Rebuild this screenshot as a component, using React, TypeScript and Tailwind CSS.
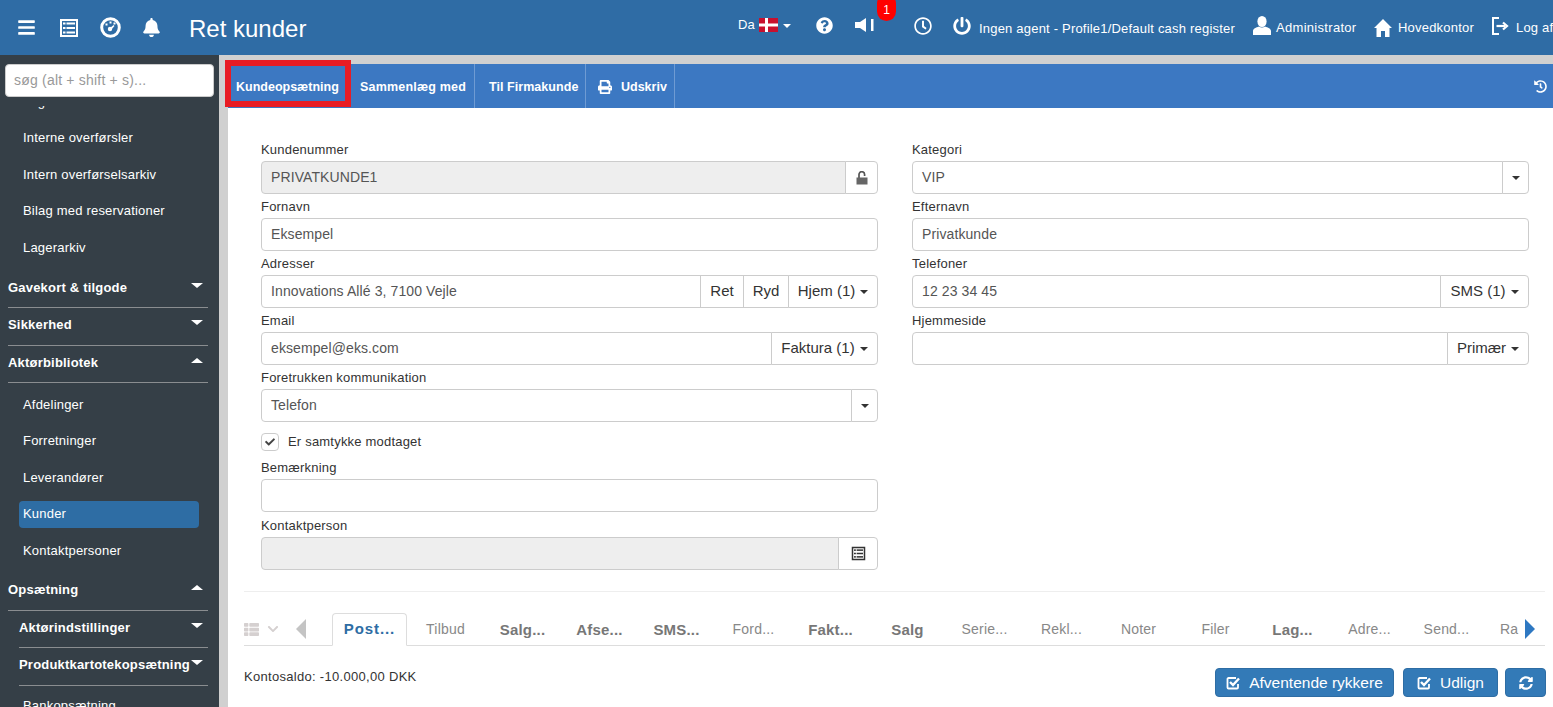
import React from 'react';
import {
  FaBars, FaBell, FaQuestionCircle, FaRegClock, FaPowerOff, FaHistory, FaPrint, FaCheck,
  FaSyncAlt, FaThList, FaChevronDown,
} from 'react-icons/fa';

const ListIcon = ({ size = 20, className = '' }: { size?: number; className?: string }) => (
  <svg width={size} height={size} viewBox="0 0 20 20" fill="currentColor" className={`shrink-0 ${className}`}>
    <path fillRule="evenodd" d="M1 1h18v18H1zM3 3v14h14V3z" />
    <rect x="4" y="4.5" width="2.5" height="2" />
    <rect x="7.5" y="4.5" width="8.5" height="2" />
    <rect x="4" y="9" width="2.5" height="2" />
    <rect x="7.5" y="9" width="8.5" height="2" />
    <rect x="4" y="13.5" width="2.5" height="2" />
    <rect x="7.5" y="13.5" width="8.5" height="2" />
  </svg>
);

const GaugeIcon = () => (
  <svg width="21" height="21" viewBox="0 0 21 21" fill="currentColor" className="ml-[21px] shrink-0">
    <circle cx="10.5" cy="10.5" r="8.8" fill="none" stroke="currentColor" strokeWidth="3" />
    <rect x="9.5" y="4.5" width="2" height="2" />
    <rect x="5.5" y="6.5" width="2" height="2" />
    <rect x="13.5" y="5.5" width="2" height="2" />
    <circle cx="10" cy="12" r="2.2" />
    <path d="M9.5 11.5l4-3.5 1 1-3.5 4z" />
  </svg>
);

const SpeakerIcon = () => (
  <svg width="20" height="14" viewBox="0 0 20 14" fill="currentColor">
    <path d="M0 4h5l6-4v14l-6-4H0z" />
    <rect x="16" y="1" width="2.5" height="12" />
  </svg>
);

const UserIcon = () => (
  <svg width="18" height="19" viewBox="0 0 18 19" fill="currentColor" className="ml-[19px] -mt-[4px] shrink-0">
    <ellipse cx="9" cy="5.5" rx="4.6" ry="5.5" />
    <path d="M6 10.5c-3 1-6 2.2-6 4.5v4h18v-4c0-2.3-3-3.5-6-4.5-1.6 1.4-4.4 1.4-6 0z" />
  </svg>
);

const HomeIcon = () => (
  <svg width="18" height="18" viewBox="0 0 18 18" fill="currentColor" className="ml-[18px] shrink-0">
    <path d="M9 0l9 9h-2.5v9H11v-6H7v6H2.500V9H0z" />
  </svg>
);

const LogoutIcon = () => (
  <svg width="17" height="18" viewBox="0 0 17 18" fill="none" stroke="currentColor" className="ml-[17px] -mt-[3px] shrink-0">
    <path d="M7 1H1v16h6" strokeWidth="2" />
    <path d="M4.500 9H13" strokeWidth="2.200" />
    <path d="M11 5.500L15 9l-4 3.500" strokeWidth="2.200" />
  </svg>
);

const CheckBoxIcon = () => (
  <svg width="14" height="14" viewBox="0 0 14 14" fill="none" stroke="currentColor" className="shrink-0">
    <path d="M12 8v3.500a1 1 0 0 1-1 1H2.500a1 1 0 0 1-1-1V3a1 1 0 0 1 1-1H10" strokeWidth="1.800" />
    <path d="M4 6l3 3 6-6.500" strokeWidth="2.400" />
  </svg>
);

const LockIcon = () => (
  <svg width="12" height="14" viewBox="0 0 12 14" className="shrink-0">
    <path d="M3 7V3.500a2.800 2.800 0 0 1 5.600 0V5" fill="none" stroke="#555" strokeWidth="1.700" />
    <rect x="0.500" y="6.500" width="11" height="7" fill="#666" />
  </svg>
);

const Caret = ({ up = false }: { up?: boolean }) => (
  <span
    className={`inline-block w-0 h-0 border-x-[6px] border-x-transparent ${
      up ? 'border-b-[5px] border-b-white' : 'border-t-[5px] border-t-white'
    }`}
  />
);

const SmallCaret = () => (
  <span className="inline-block w-0 h-0 border-x-[4px] border-x-transparent border-t-[4px] border-t-[#333]" />
);

const NavItem = ({ label, active = false }: { label: string; active?: boolean }) => (
  <div className="h-[36.6px] flex items-center">
    <div className={`ml-[19px] w-[180px] h-[27px] px-[4px] flex items-center rounded-[4px] text-white text-[13px] tracking-[0.2px] ${active ? 'bg-[#2e6da4]' : ''}`}>
      {label}
    </div>
  </div>
);

const NavSection = ({ label, open = false, sub = false }: { label: string; open?: boolean; sub?: boolean }) => (
  <div className={`h-[37.5px] pt-[9px] ${sub ? 'ml-[19px]' : 'ml-[8px]'} mr-[11px] border-b border-[#8a8d90] flex justify-between text-white font-bold text-[13px] leading-4 tracking-[0.2px]`}>
    <span>{label}</span>
    <span className="mr-[5px] mt-[3px] flex"><Caret up={open} /></span>
  </div>
);

const Sidebar = () => (
  <aside className="w-[219px] shrink-0 bg-[#353f47] flex flex-col overflow-hidden">
    <div className="pt-[9px] pl-[5px] pr-[5px] pb-[9px]">
      <div className="h-[33px] bg-white rounded-[4px] border border-[#ccc] px-[8px] flex items-center text-[14px] tracking-[0.2px] text-[#999]">
        søg (alt + shift + s)...
      </div>
    </div>
    <nav className="flex-1 overflow-hidden">
      <div className="-mt-[23px]">
        <NavItem label="Lageroverblik" />
        <NavItem label="Interne overførsler" />
        <NavItem label="Intern overførselsarkiv" />
        <NavItem label="Bilag med reservationer" />
        <NavItem label="Lagerarkiv" />
      </div>
      <div className="mt-[5px]">
        <NavSection label="Gavekort & tilgode" />
        <NavSection label="Sikkerhed" />
        <NavSection label="Aktørbibliotek" open />
      </div>
      <div className="mt-[2.5px]">
        <NavItem label="Afdelinger" />
        <NavItem label="Forretninger" />
        <NavItem label="Leverandører" />
        <NavItem label="Kunder" active />
        <NavItem label="Kontaktpersoner" />
      </div>
      <div className="mt-[4.5px]">
        <NavSection label="Opsætning" open />
        <NavSection label="Aktørindstillinger" sub />
        <NavSection label="Produktkartotekopsætning" sub />
      </div>
      <div className="mt-[2px]">
        <NavItem label="Bankopsætning" />
      </div>
    </nav>
  </aside>
);

const Flag = () => (
  <svg width="19" height="14" viewBox="0 0 19 14">
    <rect width="19" height="14" fill="#c8102e" />
    <rect x="6" width="3" height="14" fill="#fff" />
    <rect y="5.500" width="19" height="3" fill="#fff" />
  </svg>
);

const Header = () => (
  <header className="h-[55px] shrink-0 bg-[#2f6ca5] flex items-center overflow-hidden text-white whitespace-nowrap">
    <FaBars className="ml-[17px] text-[19px] shrink-0" />
    <ListIcon className="ml-[23px]" />
    <GaugeIcon />
    <FaBell className="ml-[21px] text-[19px] shrink-0" />
    <h1 className="ml-[28px] text-[24px] leading-none mt-[2px] font-normal shrink-0 w-[118px]">Ret kunder</h1>
    <span className="ml-[431px] text-[13px] -mt-[6px] w-[21px] shrink-0">Da</span>
    <span className="-mt-[6px] shrink-0"><Flag /></span>
    <span className="ml-[5px] -mt-[4px] flex shrink-0 w-[8px] h-0 border-x-[4px] border-x-transparent border-t-[4px] border-t-white" />
    <FaQuestionCircle className="ml-[25px] text-[17px] -mt-[4px] shrink-0" />
    <span className="relative ml-[22px] -mt-[6px] shrink-0 flex">
      <SpeakerIcon />
      <span className="absolute left-[22px] -top-[24px] w-[19px] h-[27px] rounded-full bg-[#f00] text-[12px] leading-none flex items-end justify-center pb-[5px]">1</span>
    </span>
    <FaRegClock className="ml-[39px] text-[18px] -mt-[4px] shrink-0" />
    <FaPowerOff className="ml-[21px] text-[18px] -mt-[4px] shrink-0" />
    <span className="ml-[8px] mt-[2px] text-[13px] tracking-[0.2px] w-[255px] shrink-0">Ingen agent - Profile1/Default cash register</span>
    <UserIcon />
    <span className="ml-[5px] mt-[1px] text-[13px] tracking-[0.3px] w-[80px] shrink-0">Administrator</span>
    <HomeIcon />
    <span className="ml-[6px] mt-[1px] text-[13px] tracking-[0.2px] w-[77px] shrink-0">Hovedkontor</span>
    <LogoutIcon />
    <span className="ml-[7px] mt-[1px] text-[13px] tracking-[0.2px] shrink-0">Log af</span>
  </header>
);

const ActionBar = () => (
  <div className="h-[44px] shrink-0 bg-[#3c78c2] flex text-white font-bold text-[12.5px] whitespace-nowrap">
    <div className="relative w-[123px] pl-[8px] pt-[2px] flex items-center">
      Kundeopsætning
      <span className="absolute -left-[3px] -top-[4px] w-[126px] h-[47px] border-[6px] border-[#e81c24]" />
    </div>
    <div className="w-[124px] pl-[9px] pt-[2px] flex items-center tracking-[0.2px] border-r border-[#6f9bd3]">Sammenlæg med</div>
    <div className="w-[111px] pl-[14px] pt-[2px] flex items-center tracking-[0.05px] border-r border-[#6f9bd3]">Til Firmakunde</div>
    <div className="w-[89px] pl-[12px] pt-[2px] flex items-center gap-[9px] border-r border-[#6f9bd3]">
      <FaPrint className="text-[14px]" />
      Udskriv
    </div>
    <div className="ml-auto mr-[6px] flex items-center"><FaHistory className="text-[13px]" /></div>
  </div>
);

const box = 'h-[33px] border border-[#ccc] flex items-center text-[14px]';

const Field = ({ label, children, className = 'mb-[4px]' }: { label: string; children: React.ReactNode; className?: string }) => (
  <div className={className}>
    <div className="h-[20px] pt-px text-[13px] leading-4 tracking-[0.2px] text-[#333]">{label}</div>
    <div className="flex">{children}</div>
  </div>
);

const TextBox = ({ value = '', disabled = false, joined = false }: { value?: string; disabled?: boolean; joined?: boolean }) => (
  <div className={`${box} flex-1 min-w-0 px-[9px] tracking-[0.1px] text-[#555] ${joined ? 'rounded-l-[4px]' : 'rounded-[4px]'} ${disabled ? 'bg-[#eee]' : 'bg-white'}`}>
    {value}
  </div>
);

const Addon = ({ children, w, last = false }: { children: React.ReactNode; w: string; last?: boolean }) => (
  <div className={`${box} ${w} shrink-0 justify-center gap-[5px] -ml-px text-[15px] text-[#333] bg-white ${last ? 'rounded-r-[4px]' : ''}`}>
    {children}
  </div>
);

const FormLeft = () => (
  <div className="flex-1 min-w-0">
    <Field label="Kundenummer">
      <TextBox value="PRIVATKUNDE1" disabled joined />
      <Addon w="w-[33px]" last><LockIcon /></Addon>
    </Field>
    <Field label="Fornavn"><TextBox value="Eksempel" /></Field>
    <Field label="Adresser">
      <TextBox value="Innovations Allé 3, 7100 Vejle" joined />
      <Addon w="w-[44px]">Ret</Addon>
      <Addon w="w-[46px]">Ryd</Addon>
      <Addon w="w-[90px]" last>Hjem (1) <SmallCaret /></Addon>
    </Field>
    <Field label="Email">
      <TextBox value="eksempel@eks.com" joined />
      <Addon w="w-[107px]" last>Faktura (1) <SmallCaret /></Addon>
    </Field>
    <Field label="Foretrukken kommunikation">
      <TextBox value="Telefon" joined />
      <Addon w="w-[27px]" last><SmallCaret /></Addon>
    </Field>
    <div className="h-[18px] mt-[11px] mb-[8px] flex items-center">
      <span className="w-[18px] h-[18px] border border-[#ccc] rounded-[4px] flex items-center justify-center">
        <FaCheck className="text-[10px] text-[#444]" />
      </span>
      <span className="ml-[9px] text-[13px] tracking-[0.2px] text-[#333]">Er samtykke modtaget</span>
    </div>
    <Field label="Bemærkning" className="mb-[5px]"><TextBox /></Field>
    <Field label="Kontaktperson">
      <TextBox disabled joined />
      <Addon w="w-[40px]" last><ListIcon size={15} className="text-[#333]" /></Addon>
    </Field>
  </div>
);

const FormRight = () => (
  <div className="flex-1 min-w-0">
    <Field label="Kategori">
      <TextBox value="VIP" joined />
      <Addon w="w-[27px]" last><SmallCaret /></Addon>
    </Field>
    <Field label="Efternavn"><TextBox value="Privatkunde" /></Field>
    <Field label="Telefoner">
      <TextBox value="12 23 34 45" joined />
      <Addon w="w-[89px]" last>SMS (1) <SmallCaret /></Addon>
    </Field>
    <Field label="Hjemmeside">
      <TextBox joined />
      <Addon w="w-[82px]" last>Primær <SmallCaret /></Addon>
    </Field>
  </div>
);

const tabs: { label: string; bold?: boolean }[] = [
  { label: 'Tilbud' },
  { label: 'Salg...', bold: true },
  { label: 'Afse...', bold: true },
  { label: 'SMS...', bold: true },
  { label: 'Ford...' },
  { label: 'Fakt...', bold: true },
  { label: 'Salg', bold: true },
  { label: 'Serie...' },
  { label: 'Rekl...' },
  { label: 'Noter' },
  { label: 'Filer' },
  { label: 'Lag...', bold: true },
  { label: 'Adre...' },
  { label: 'Send...' },
];

const TabStrip = () => (
  <div className="h-[33px] mt-[21px] border-b border-[#ddd] flex text-[14px] tracking-[0.2px] whitespace-nowrap">
    <div className="w-[36px] flex items-center gap-[8px] text-[#d5d0d0]">
      <FaThList className="text-[15px] shrink-0" />
      <FaChevronDown className="text-[12px] shrink-0" />
    </div>
    <div className="ml-[16px] w-[36px] flex items-center">
      <span className="w-0 h-0 border-y-[10px] border-y-transparent border-r-[10px] border-r-[#c4c4c4]" />
    </div>
    <div className="w-[75px] h-[33px] border border-[#ddd] border-b-white rounded-t-[4px] bg-white flex items-center justify-center font-bold text-[15px] tracking-[0.9px] text-[#2e6da4]">
      Post...
    </div>
    {tabs.map((t) => (
      <div
        key={t.label + (t.bold ? 'b' : '')}
        className={`w-[77px] shrink-0 text-center leading-[33px] ${t.bold ? 'font-bold text-[15px] text-[#777]' : 'text-[#888]'}`}
      >
        {t.label}
      </div>
    ))}
    <div className="w-[40px] shrink-0 pl-[15px] leading-[33px] text-[#888]">Ra</div>
    <div className="flex items-center">
      <span className="w-0 h-0 border-y-[10px] border-y-transparent border-l-[10px] border-l-[#2e78c2]" />
    </div>
  </div>
);

const blueBtn = 'h-[29px] bg-[#337ab7] border border-[#2e6da4] rounded-[4px] text-white text-[15.5px] flex items-center justify-center';

const Footer = () => (
  <div className="flex mt-[22px]">
    <div className="mt-px text-[13px] tracking-[0.3px] text-[#333] leading-4">Kontosaldo: -10.000,00 DKK</div>
    <div className="ml-auto -mr-px flex">
      <button className={`${blueBtn} w-[179px] gap-[9px]`}><CheckBoxIcon />Afventende rykkere</button>
      <button className={`${blueBtn} w-[95px] ml-[9px] gap-[9px]`}><CheckBoxIcon />Udlign</button>
      <button className={`${blueBtn} w-[41px] ml-[7px]`}><FaSyncAlt className="text-[14px]" /></button>
    </div>
  </div>
);

export default function App() {
  return (
    <div className="w-full h-[707px] overflow-hidden flex flex-col bg-white font-['Liberation_Sans',Arial,sans-serif]">
      <Header />
      <div className="flex flex-1 min-h-0">
        <Sidebar />
        <main className="flex-1 min-w-0 pl-[9px] pt-[9px] bg-[#d0d0d0] flex flex-col">
          <ActionBar />
          <div className="flex-1 bg-white pl-[16px] pr-[8px] overflow-hidden">
            <div className="pt-[33px] pl-[17px] pr-[16px] flex gap-[34px] pb-[17px] border-b border-[#eee]">
              <FormLeft />
              <FormRight />
            </div>
            <TabStrip />
            <Footer />
          </div>
        </main>
      </div>
    </div>
  );
}
